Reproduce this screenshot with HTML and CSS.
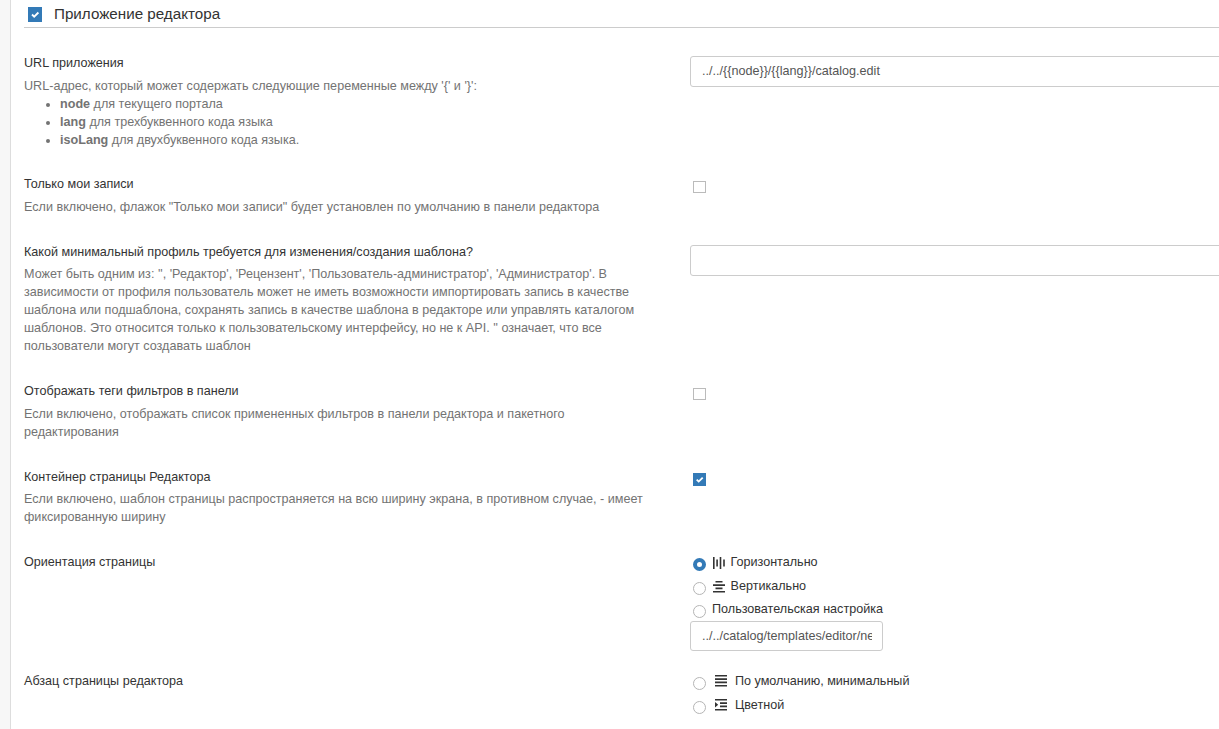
FILE: index.html
```html
<!DOCTYPE html>
<html lang="ru">
<head>
<meta charset="utf-8">
<title>Приложение редактора</title>
<link rel="stylesheet" href="styles.css">
</head>
<body>
<main class="panel">
  <h1 class="legend"><span class="check check-on check-lg"><svg viewBox="0 0 14 15"><path d="M4 7.5l2.2 2.2 4.2-4.2"/></svg></span><span class="legend-text">Приложение редактора</span></h1>

  <section class="row row-url">
    <div class="info">
      <div class="label">URL приложения</div>
      <div class="help">URL-адрес, который может содержать следующие переменные между '{' и '}':
        <ul class="vars">
          <li><b>node</b> для текущего портала</li>
          <li><b>lang</b> для трехбуквенного кода языка</li>
          <li><b>isoLang</b> для двухбуквенного кода языка.</li>
        </ul>
      </div>
    </div>
    <div class="control"><div class="field">../../{{node}}/{{lang}}/catalog.edit</div></div>
  </section>

  <section class="row row-own">
    <div class="info">
      <div class="label">Только мои записи</div>
      <div class="help">Если включено, флажок "Только мои записи" будет установлен по умолчанию в панели редактора</div>
    </div>
    <div class="control"><span class="check"></span></div>
  </section>

  <section class="row row-profile">
    <div class="info">
      <div class="label">Какой минимальный профиль требуется для изменения/создания шаблона?</div>
      <div class="help">Может быть одним из: '', 'Редактор', 'Рецензент', 'Пользователь-администратор', 'Администратор'. В<br>зависимости от профиля пользователь может не иметь возможности импортировать запись в качестве<br>шаблона или подшаблона, сохранять запись в качестве шаблона в редакторе или управлять каталогом<br>шаблонов. Это относится только к пользовательскому интерфейсу, но не к API. '' означает, что все<br>пользователи могут создавать шаблон</div>
    </div>
    <div class="control"><div class="field"></div></div>
  </section>

  <section class="row row-tags">
    <div class="info">
      <div class="label">Отображать теги фильтров в панели</div>
      <div class="help">Если включено, отображать список примененных фильтров в панели редактора и пакетного<br>редактирования</div>
    </div>
    <div class="control"><span class="check"></span></div>
  </section>

  <section class="row row-container">
    <div class="info">
      <div class="label">Контейнер страницы Редактора</div>
      <div class="help">Если включено, шаблон страницы распространяется на всю ширину экрана, в противном случае, - имеет<br>фиксированную ширину</div>
    </div>
    <div class="control"><span class="check check-on"><svg viewBox="0 0 13 13"><path d="M3.7 6.6l2 2 4-4"/></svg></span></div>
  </section>

  <section class="row row-orient">
    <div class="info"><div class="label">Ориентация страницы</div></div>
    <div class="control options">
      <div class="option"><span class="radio radio-on"></span><svg class="icon" viewBox="0 0 12 12"><path d="M0 0h1.6v12H0zM3.3 2.5h1.6v7H3.3zM6.7 0h1.6v12H6.7zM10.2 2.5h1.6v7h-1.6z"/></svg><span>Горизонтально</span></div>
      <div class="option"><span class="radio"></span><svg class="icon" viewBox="0 0 12 12"><path d="M2.5 0h7v1.6h-7zM0 3.3h12v1.6H0zM2.5 6.6h7v1.6h-7zM0 10h12v1.6H0z"/></svg><span>Вертикально</span></div>
      <div class="option option-last"><span class="radio"></span><span>Пользовательская настройка</span></div>
      <div class="field field-sm"><span class="clip">../../catalog/templates/editor/ne</span></div>
    </div>
  </section>

  <section class="row row-indent">
    <div class="info"><div class="label">Абзац страницы редактора</div></div>
    <div class="control options options-wide">
      <div class="option"><span class="radio"></span><svg class="icon" viewBox="0 0 12 12"><path d="M0 0h12v1.6H0zM0 3.3h12v1.6H0zM0 6.6h12v1.6H0zM0 10h12v1.6H0z"/></svg><span>По умолчанию, минимальный</span></div>
      <div class="option"><span class="radio"></span><svg class="icon" viewBox="0 0 12 12"><path d="M0 0h12v1.6H0zM5 3.3h7v1.6H5zM5 6.6h7v1.6H5zM0 10h12v1.6H0zM0 3l3.2 2.8L0 8.6z"/></svg><span>Цветной</span></div>
    </div>
  </section>
</main>
</body>
</html>
```
FILE: styles.css
```css
* { box-sizing: border-box; }
body {
  margin: 0;
  height: 729px;
  overflow: hidden;
  background: #f7f7f7;
  font: 12.6px/18px "Liberation Sans", Arial, sans-serif;
  color: #333;
}
.panel {
  height: 729px;
  margin-left: 10px;
  padding-left: 13px;
  border-left: 1px solid #ddd;
  background: #fff;
  overflow: hidden;
}
.legend {
  display: flex;
  height: 28px;
  margin: 0 0 26px;
  padding: 5px 0 0 4px;
  border-bottom: 1px solid #ccc;
  font-size: 15.2px;
  font-weight: normal;
}
.legend-text { margin-left: 12px; }
.row {
  display: grid;
  grid-template-columns: 666px 1fr;
  white-space: nowrap;
}
.row-url { height: 121px; }
.row-own { height: 68px; }
.row-profile { height: 139px; }
.row-tags { height: 86px; }
.row-container { height: 85px; }
.row-orient { height: 119px; }
.help { margin-top: 5px; color: #737373; }
.row-profile .help, .row-container .help { margin-top: 4px; }
.vars { margin: 0; padding-left: 36px; }
.control { padding-top: 5px; }
.row-container .control { padding-top: 4px; }
.row-url .control, .row-profile .control { padding-top: 2px; }
.field {
  width: 560px;
  height: 31px;
  padding: 5px 11px;
  border: 1px solid #ccc;
  border-radius: 3px;
  color: #555;
}
.field-sm { width: 193px; height: 30px; padding: 5px 10px 5px 11px; }
.clip { display: block; overflow: hidden; }
.check {
  display: block;
  width: 13px;
  height: 12px;
  margin: 1px 0 0 3px;
  border: 1px solid #bbb;
}
.check-on { height: 13px; border: 0; background: #337ab7; }
.check-lg { width: 14px; height: 15px; margin: 2px 0 0; }
.check svg { display: block; width: 100%; height: 100%; fill: none; stroke: #fff; stroke-width: 1.8; }
.row .options { padding-top: 0; }
.option { display: flex; height: 23.5px; align-items: flex-start; }
.option-last { height: 21px; }
.radio {
  flex: none;
  width: 13px;
  height: 13px;
  margin: 5px 6px 0 3px;
  border: 1px solid #b5b5b5;
  border-radius: 50%;
}
.radio-on { border: 4px solid #337ab7; }
.icon { flex: none; width: 12px; height: 12px; margin: 4px 5.5px 0 1px; fill: #333; }
.options-wide .icon { margin: 3px 8px 0 3px; }
```
